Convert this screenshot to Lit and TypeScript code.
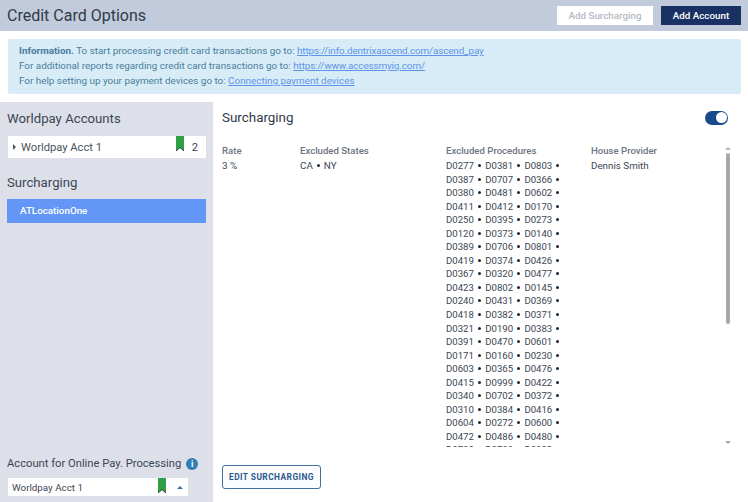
import { LitElement, html, css, svg } from 'lit';
import { customElement } from 'lit/decorators.js';

const PROCEDURES = [
  ['D0277', 'D0381', 'D0803'],
  ['D0387', 'D0707', 'D0366'],
  ['D0380', 'D0481', 'D0602'],
  ['D0411', 'D0412', 'D0170'],
  ['D0250', 'D0395', 'D0273'],
  ['D0120', 'D0373', 'D0140'],
  ['D0389', 'D0706', 'D0801'],
  ['D0419', 'D0374', 'D0426'],
  ['D0367', 'D0320', 'D0477'],
  ['D0423', 'D0802', 'D0145'],
  ['D0240', 'D0431', 'D0369'],
  ['D0418', 'D0382', 'D0371'],
  ['D0321', 'D0190', 'D0383'],
  ['D0391', 'D0470', 'D0601'],
  ['D0171', 'D0160', 'D0230'],
  ['D0603', 'D0365', 'D0476'],
  ['D0415', 'D0999', 'D0422'],
  ['D0340', 'D0702', 'D0372'],
  ['D0310', 'D0384', 'D0416'],
  ['D0604', 'D0272', 'D0600'],
  ['D0472', 'D0486', 'D0480'],
  ['D0700', 'D0709', 'D0322'],
];

const bookmark = svg`<svg width="8" height="15" viewBox="0 0 8 15"><path d="M0 0H8V15L4 11.5 0 15Z" fill="#2f9e44"/><path d="M0 15L4 11.5 8 15" fill="none" stroke="#1c3a2a" stroke-width="1"/></svg>`;

@customElement('app-root')
export class AppRoot extends LitElement {
  static styles = css`
    :host {
      display: flex;
      flex-direction: column;
      width: 748px;
      height: 502px;
      overflow: hidden;
      background: #fff;
      font-family: Roboto, sans-serif;
      color: #3c4654;
    }

    .header {
      display: flex;
      align-items: center;
      justify-content: space-between;
      height: 31px;
      padding: 0 7px;
      background: #c2cbdb;
      flex: none;
    }

    .title {
      font-size: 16px;
      color: #2f3a4a;
    }

    .actions {
      display: flex;
      gap: 8px;
    }

    .btn {
      height: 19px;
      line-height: 19px;
      font-size: 9.8px;
      font-weight: 500;
      text-align: center;
    }

    .btn.light {
      width: 96px;
      background: #fff;
      color: #b3bac4;
    }

    .btn.dark {
      width: 80px;
      background: #1a3263;
      color: #fff;
    }

    .info {
      flex: none;
      margin: 8px 7px 8px 8px;
      padding: 4px 11px 0;
      height: 51px;
      background: #d7ecf6;
      border-radius: 2px;
      font-size: 9.9px;
      line-height: 15px;
      color: #4a7d9c;
    }

    .info b {
      font-weight: 700;
    }

    .info a {
      color: #5f93ea;
      text-decoration: underline;
    }

    .info a.url {
      letter-spacing: -0.12px;
    }

    .main {
      flex: 1;
      display: flex;
      min-height: 0;
    }

    .side {
      width: 213px;
      flex: none;
      box-sizing: border-box;
      padding: 9px 7px 0;
      background: #dde0e9;
      display: flex;
      flex-direction: column;
    }

    .side h2 {
      margin: 0;
      font-size: 13.2px;
      font-weight: 400;
      line-height: 16px;
      color: #3c4654;
    }

    .account {
      margin: 9px 0 17px 1px;
      height: 22px;
      background: #fff;
      display: flex;
      align-items: center;
      font-size: 11.2px;
      color: #4a5361;
    }

    .caret {
      width: 0;
      height: 0;
      margin: 0 5px 0 5px;
      border-left: 3px solid #4a5361;
      border-top: 3px solid transparent;
      border-bottom: 3px solid transparent;
    }

    .account .name {
      flex: 1;
    }

    .account svg {
      margin-bottom: 7px;
    }

    .account .count {
      width: 22px;
      text-align: center;
      color: #3c4654;
    }

    .location {
      margin-top: 8px;
      height: 24px;
      line-height: 24px;
      padding-left: 13px;
      background: #6396f6;
      color: #fff;
      font-size: 9.8px;
      font-weight: 500;
    }

    .online {
      margin-top: auto;
      padding-bottom: 6px;
    }

    .online-label {
      display: flex;
      align-items: center;
      gap: 5px;
      font-size: 11.2px;
      line-height: 14px;
      color: #3c4654;
    }

    .i-dot {
      width: 12px;
      height: 12px;
      border-radius: 50%;
      background: #2f7fb5;
      color: #fff;
      font-size: 9px;
      font-weight: 700;
      line-height: 12px;
      text-align: center;
    }

    .select {
      margin: 7px 1px 0 1px;
      width: 180px;
      height: 18px;
      background: #fff;
      display: flex;
      align-items: center;
      font-size: 9.8px;
      color: #3c4654;
      padding-left: 4px;
      box-sizing: border-box;
    }

    .select .name {
      flex: 1;
    }

    .select svg {
      margin-bottom: 3px;
    }

    .up {
      width: 0;
      height: 0;
      margin: 0 5.5px 0 10.5px;
      border-left: 3px solid transparent;
      border-right: 3px solid transparent;
      border-bottom: 3px solid #3f7199;
    }

    .content {
      flex: 1;
      min-width: 0;
      display: flex;
      flex-direction: column;
      padding: 7px 0 13px 9px;
    }

    .content-head {
      display: flex;
      align-items: center;
      justify-content: space-between;
      height: 17px;
      padding-right: 20px;
    }

    .content-head h2 {
      margin: 0;
      font-size: 13.4px;
      font-weight: 400;
      color: #2f3a4a;
    }

    .toggle {
      width: 23px;
      height: 14px;
      border-radius: 7px;
      background: #174a8b;
      display: flex;
      align-items: center;
      justify-content: flex-end;
      padding-right: 1.5px;
      box-sizing: border-box;
    }

    .toggle span {
      width: 11px;
      height: 11px;
      border-radius: 50%;
      background: #fff;
    }

    .table-wrap {
      margin-top: 17px;
      height: 304px;
      display: flex;
      min-height: 0;
    }

    .table {
      flex: 1;
      overflow: hidden;
      display: grid;
      grid-template-columns: 78px 146px 145px 1fr;
      align-content: start;
      font-size: 9.6px;
      color: #3c4654;
    }

    .th {
      color: #6c7480;
      font-weight: 500;
      line-height: 15px;
      height: 15px;
    }

    .td {
      line-height: 13.55px;
      padding-top: 1px;
      font-size: 9.8px;
    }

    .code-row {
      display: flex;
      height: 13.55px;
    }

    .code {
      width: 39.2px;
      position: relative;
      font-size: 9.6px;
    }

    .code::after {
      content: '';
      position: absolute;
      right: 4.7px;
      top: 5px;
      width: 3px;
      height: 3px;
      border-radius: 50%;
      background: #1f2530;
    }

    .states {
      display: flex;
      align-items: flex-start;
      gap: 4px;
    }

    .states i {
      width: 3px;
      height: 3px;
      margin-top: 5px;
      border-radius: 50%;
      background: #1f2530;
    }

    .scroll {
      width: 8px;
      margin-right: 16px;
      display: flex;
      flex-direction: column;
      align-items: center;
      padding: 4px 0 3px;
    }

    .scroll .arrow-up,
    .scroll .arrow-down {
      width: 0;
      height: 0;
      border-left: 3px solid transparent;
      border-right: 3px solid transparent;
    }

    .scroll .arrow-up {
      border-bottom: 3px solid #b0b3b8;
    }

    .scroll .arrow-down {
      margin-top: auto;
      border-top: 3px solid #a0a3a8;
    }

    .thumb {
      width: 4px;
      height: 171px;
      margin-top: 3px;
      border-radius: 2px;
      background: #a6a9ae;
    }

    .edit {
      margin-top: auto;
      width: 99px;
      height: 24px;
      box-sizing: border-box;
      border: 1px solid #3f6fa3;
      border-radius: 3px;
      background: #fbfcfe;
      color: #2c5a8f;
      font-size: 8.4px;
      font-weight: 700;
      letter-spacing: 0.45px;
      line-height: 22px;
      text-align: center;
    }
  `;

  render() {
    return html`
      <div class="header">
        <div class="title">Credit Card Options</div>
        <div class="actions">
          <div class="btn light">Add Surcharging</div>
          <div class="btn dark">Add Account</div>
        </div>
      </div>
      <div class="info">
        <div><b>Information.</b> To start processing credit card transactions go to: <a class="url">https://info.dentrixascend.com/ascend_pay</a></div>
        <div>For additional reports regarding credit card transactions go to: <a class="url">https://www.accessmyiq.com/</a></div>
        <div>For help setting up your payment devices go to: <a>Connecting payment devices</a></div>
      </div>
      <div class="main">
        <div class="side">
          <h2>Worldpay Accounts</h2>
          <div class="account">
            <span class="caret"></span>
            <span class="name">Worldpay Acct 1</span>
            ${bookmark}
            <span class="count">2</span>
          </div>
          <h2>Surcharging</h2>
          <div class="location">ATLocationOne</div>
          <div class="online">
            <div class="online-label">Account for Online Pay. Processing <span class="i-dot">i</span></div>
            <div class="select">
              <span class="name">Worldpay Acct 1</span>
              ${bookmark}
              <span class="up"></span>
            </div>
          </div>
        </div>
        <div class="content">
          <div class="content-head">
            <h2>Surcharging</h2>
            <div class="toggle"><span></span></div>
          </div>
          <div class="table-wrap">
            <div class="table">
              <div class="th">Rate</div>
              <div class="th">Excluded States</div>
              <div class="th">Excluded Procedures</div>
              <div class="th">House Provider</div>
              <div class="td">3 %</div>
              <div class="td states"><span>CA</span><i></i><span>NY</span></div>
              <div class="td">
                ${PROCEDURES.map(
                  (row) => html`<div class="code-row">${row.map((c) => html`<span class="code">${c}</span>`)}</div>`
                )}
              </div>
              <div class="td">Dennis Smith</div>
            </div>
            <div class="scroll">
              <span class="arrow-up"></span>
              <span class="thumb"></span>
              <span class="arrow-down"></span>
            </div>
          </div>
          <div class="edit">EDIT SURCHARGING</div>
        </div>
      </div>
    `;
  }
}
